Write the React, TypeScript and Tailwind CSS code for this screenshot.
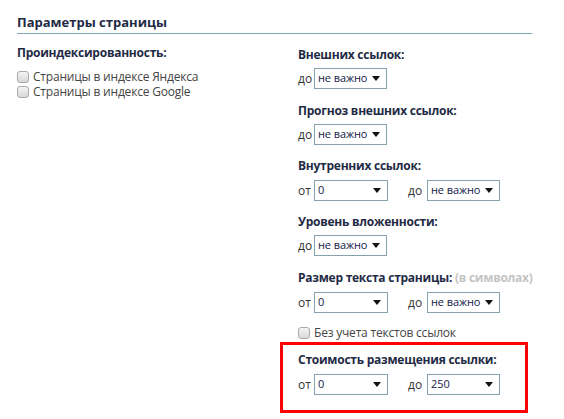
import React from "react";

const font = { fontFamily: '"Open Sans", "Noto Sans", sans-serif' };

function Arrow() {
  return (
    <svg width="8" height="5" viewBox="0 0 8 5" className="shrink-0">
      <path d="M0 0h8L4 5z" fill="#111" />
    </svg>
  );
}

function Select({ value, w = "w-[73px]" }: { value: string; w?: string }) {
  return (
    <div
      className={`flex h-[21px] ${w} items-center justify-between whitespace-nowrap border border-[#86a2ae] bg-white pl-[3px] pr-[6px] text-[11px] tracking-[-0.1px] text-[#16204a]`}
    >
      <span>{value}</span>
      <Arrow />
    </div>
  );
}

function Check({ label }: { label: string }) {
  return (
    <label className="flex h-[15px] items-center gap-[4px] whitespace-nowrap text-[12px] leading-[15px] tracking-[-0.2px] text-[#444]">
      <span className="h-[12px] w-[12px] shrink-0 rounded-[3px] border border-[#a9a9a9] bg-gradient-to-b from-[#f4f4f4] to-[#d8d8d8]" />
      {label}
    </label>
  );
}

function Heading({ children }: { children: React.ReactNode }) {
  return (
    <div className="h-[16px] whitespace-nowrap text-[12px] font-bold leading-[16px] tracking-[-0.25px] text-[#1f2b45]">
      {children}
    </div>
  );
}

function Label({ children }: { children: React.ReactNode }) {
  return <span className="w-[16px] shrink-0 text-[12px] text-[#333]">{children}</span>;
}

function Single({ label, value }: { label: string; value: string }) {
  return (
    <div className="mt-[5px] flex items-center">
      <Label>{label}</Label>
      <Select value={value} />
    </div>
  );
}

function Range({ from, to }: { from: string; to: string }) {
  return (
    <div className="mt-[6px] flex items-center">
      <Label>от</Label>
      <Select value={from} w="w-[74px]" />
      <span className="ml-[20px] w-[19px] text-[12px] text-[#333]">до</span>
      <Select value={to} />
    </div>
  );
}

export default function App() {
  return (
    <div className="min-h-[419px] w-[564px] bg-white pl-[17px] pt-[14px]" style={font}>
      <div className="w-[515px] border-b border-[#7fa5b0] pb-[3px]">
        <div className="h-[16px] text-[13px] font-bold leading-[16px] text-[#1f2b45]">Параметры страницы</div>
      </div>
      <div className="mt-[10px] flex">
        <div className="w-[281px] pt-[1px]">
          <Heading>Проиндексированность:</Heading>
          <div className="mt-[8px] flex flex-col">
            <Check label="Страницы в индексе Яндекса" />
            <Check label="Страницы в индексе Google" />
          </div>
        </div>
        <div className="flex flex-col pt-[3px]">
          <Heading>Внешних ссылок:</Heading>
          <Single label="до" value="не важно" />

          <div className="mt-[14px]">
            <Heading>Прогноз внешних ссылок:</Heading>
            <Single label="до" value="не важно" />
          </div>

          <div className="mt-[13px]">
            <Heading>Внутренних ссылок:</Heading>
            <Range from="0" to="не важно" />
          </div>

          <div className="mt-[13px]">
            <Heading>Уровень вложенности:</Heading>
            <Single label="до" value="не важно" />
          </div>

          <div className="mt-[14px]">
            <Heading>
              Размер текста страницы: <span className="text-[#c4c4c4]">(в символах)</span>
            </Heading>
            <Range from="0" to="не важно" />
          </div>

          <div className="mt-[12px]">
            <Check label="Без учета текстов ссылок" />
          </div>

          <div className="ml-[-18px] mt-[2px] w-[248px] border-[3px] border-[#f00] pb-[15px] pl-[15px] pt-[7px]">
            <Heading>Стоимость размещения ссылки:</Heading>
            <Range from="0" to="250" />
          </div>
        </div>
      </div>
    </div>
  );
}
